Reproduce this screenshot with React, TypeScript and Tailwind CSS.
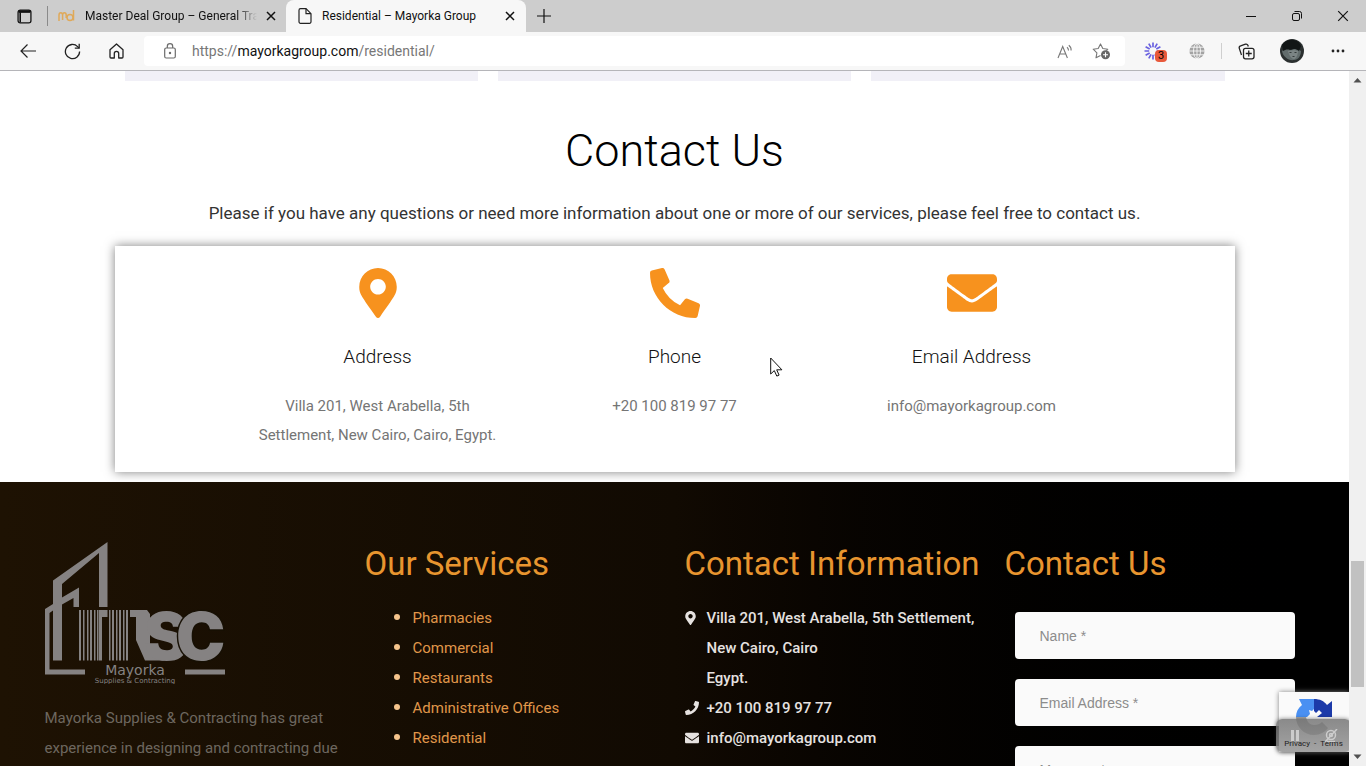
import type { ReactNode } from "react";
import { FaEnvelope, FaMapMarkerAlt, FaPhone, FaPhoneAlt } from "react-icons/fa";

const services = [
  "Pharmacies",
  "Commercial",
  "Restaurants",
  "Administrative Offices",
  "Residential",
];

function IconButton({ label, className = "", children }: { label: string; className?: string; children: ReactNode }) {
  return (
    <button aria-label={label} className={`flex shrink-0 items-center justify-center ${className}`}>
      {children}
    </button>
  );
}

function CloseIcon({ size = 10, width = 1.5 }: { size?: number; width?: number }) {
  return (
    <svg width={size} height={size} viewBox="0 0 10 10" fill="none" stroke="#111" strokeWidth={width}>
      <path d="M1 1l8 8M9 1l-8 8" />
    </svg>
  );
}

function TabStrip() {
  return (
    <div className="flex h-8 items-stretch bg-[#cdcdcd] text-xs text-[#111]">
      <IconButton label="Tab actions" className="w-12">
        <svg width="15" height="15" viewBox="0 0 14 14" fill="none" stroke="#111" strokeWidth="1.2">
          <rect x="1" y="1" width="12" height="12" rx="2" />
          <path d="M1.5 2.400h11" strokeWidth="2.400" />
          <path d="M3 3v9.5" strokeWidth="1.500" />
        </svg>
      </IconButton>
      <div className="flex w-[238px] items-center">
        <span className="-ml-px h-5 w-px bg-[#8a8a8a]" />
        <svg className="ml-2.5 shrink-0" width="17" height="14" viewBox="0 0 17 14" fill="none" stroke="#dfa95a" strokeWidth="1.500">
          <path d="M1 12V6c0-3 3.600-3 3.600 0v5M4.600 6c0-3 3.600-3 3.600 0v3" />
          <circle cx="12" cy="8.400" r="3" />
          <path d="M15.500 1v10.500" />
        </svg>
        <span className="ml-2.5 w-[172px] whitespace-nowrap [mask-image:linear-gradient(to_right,black_88%,transparent)]">
          Master Deal Group – General Tra
        </span>
        <IconButton label="Close tab" className="ml-1.5 w-4">
          <CloseIcon />
        </IconButton>
      </div>
      <div className="flex w-60 items-center rounded-t-lg bg-[#f7f7f7] pr-2 pl-3">
        <svg width="14" height="16" viewBox="0 0 14 16" fill="none" stroke="#222" strokeWidth="1.2">
          <path d="M2.500 0.700h5.500l5 5v8.100a1.500 1.500 0 0 1-1.500 1.500h-9a1.500 1.500 0 0 1-1.500-1.500v-11.600a1.500 1.500 0 0 1 1.500-1.500z" />
          <path d="M8 0.700v5h5" />
        </svg>
        <span className="ml-2.5 flex-1 whitespace-nowrap">Residential – Mayorka Group</span>
        <IconButton label="Close tab" className="w-4">
          <CloseIcon />
        </IconButton>
      </div>
      <IconButton label="New tab" className="w-9">
        <svg width="14" height="14" viewBox="0 0 14 14" stroke="#111" strokeWidth="1.2">
          <path d="M7 0v14M0 7h14" />
        </svg>
      </IconButton>
      <div className="ml-auto flex">
        <IconButton label="Minimize" className="w-[46px]">
          <svg width="10" height="10" viewBox="0 0 10 10" stroke="#111">
            <path d="M0 5.500h10" />
          </svg>
        </IconButton>
        <IconButton label="Restore" className="w-[46px]">
          <svg width="10" height="10" viewBox="0 0 10 10" fill="none" stroke="#111">
            <rect x="0.500" y="2.500" width="7" height="7" rx="1.500" />
            <path d="M2.500 0.500h5a2 2 0 0 1 2 2v5" />
          </svg>
        </IconButton>
        <IconButton label="Close" className="w-[46px]">
          <CloseIcon size={12} width={1} />
        </IconButton>
      </div>
    </div>
  );
}

function Toolbar() {
  return (
    <div className="flex h-[39px] items-center border-b border-[#b5b5b9] bg-[#f7f7f7] pl-1.5">
      <IconButton label="Back" className="w-11">
        <svg width="16" height="14" viewBox="0 0 16 14" fill="none" stroke="#222" strokeWidth="1.2">
          <path d="M7.500 0.500L1 7l6.500 6.500M1 7h15" />
        </svg>
      </IconButton>
      <IconButton label="Refresh" className="w-11">
        <svg width="17" height="17" viewBox="0 0 17 17" fill="none" stroke="#222" strokeWidth="1.300">
          <path d="M15.600 8.500a7.100 7.100 0 1 1-2-4.900L15 5" />
          <path d="M15.200 0.800V5.200H10.800" />
        </svg>
      </IconButton>
      <IconButton label="Home" className="w-11">
        <svg width="15" height="16" viewBox="0 0 15 16" fill="none" stroke="#222" strokeWidth="1.300" strokeLinejoin="round">
          <path d="M1 6.700L7.500 1l6.500 5.700V14a1 1 0 0 1-1 1H9.700v-4.500a2.200 2.200 0 0 0-4.400 0V15H2a1 1 0 0 1-1-1z" />
        </svg>
      </IconButton>
      <div className="ml-1.5 flex h-[30px] flex-1 items-center rounded bg-white pr-2 pl-5">
        <svg className="shrink-0" width="12" height="16" viewBox="0 0 12 16" fill="none" stroke="#6b6b6b" strokeWidth="1.200">
          <rect x="0.700" y="5" width="10.600" height="10" rx="1.500" />
          <path d="M3.300 5V3.400a2.700 2.700 0 0 1 5.400 0V5" />
          <circle cx="6" cy="10" r="0.600" fill="#6b6b6b" />
        </svg>
        <a href="#residential" className="ml-4 text-sm whitespace-nowrap text-[#777]">
          https://<span className="text-[#111]">mayorkagroup.com</span>/residential/
        </a>
        <IconButton label="Read aloud" className="ml-auto w-8">
          <svg width="17" height="15" viewBox="0 0 17 15" fill="none" stroke="#777" strokeWidth="1.100">
            <path d="M1 14L5.700 2.500 10.400 14M2.700 10h6" />
            <path d="M10 3.200a4 4 0 0 1 1.500 3.300M11.800 1.200a6 6 0 0 1 2.300 5.300" />
          </svg>
        </IconButton>
        <IconButton label="Add to favorites" className="ml-1 w-8">
          <svg width="19" height="18" viewBox="0 0 19 18" fill="none" stroke="#777" strokeWidth="1.100" strokeLinejoin="round">
            <path d="M8.500 13.400L4 15.800l.9-5L1.200 7.200l5-.7L8.500 1.900l2.300 4.600 5 .7-1.600 1.500" />
            <circle cx="13.500" cy="12.800" r="4.500" fill="#666" stroke="none" />
            <path d="M13.500 10.300v5M11 12.800h5" stroke="#fff" />
          </svg>
        </IconButton>
      </div>
      <IconButton label="Extension with 3 notices" className="relative ml-2.5 w-9">
        <svg width="18" height="18" viewBox="-9 -9 18 18" stroke="#6a61e0" strokeWidth="1.700">
          <path d="M0-8.500V-3.800M0 8.500V3.800M-8.500 0H-3.800M8.500 0H3.800M4.200-7.400L1.900-3.300M-4.200-7.400L-1.900-3.300M4.200 7.400L1.900 3.300M-4.200 7.400L-1.900 3.300M7.400-4.200L3.300-1.900M-7.400-4.200L-3.300-1.900M7.400 4.200L3.300 1.900M-7.400 4.200L-3.300 1.900" />
        </svg>
        <span className="absolute top-2 right-1 flex h-3 w-3 items-center justify-center rounded-sm bg-[#e8593b] text-[11px] leading-3 text-black">
          3
        </span>
      </IconButton>
      <IconButton label="Web translator" className="ml-1 w-11">
        <svg width="16" height="16" viewBox="0 0 16 16" fill="none" stroke="#f7f7f7" strokeWidth="0.900">
          <circle cx="8" cy="8" r="7.600" fill="#a3a3a3" stroke="none" />
          <ellipse cx="8" cy="8" rx="3.500" ry="7.600" />
          <path d="M8 0v16M0 8h16M1 4.200h14M1 11.800h14" />
        </svg>
      </IconButton>
      <span className="ml-0.5 h-4 w-px bg-[#cfcfcf]" />
      <IconButton label="Collections" className="ml-0.5 w-11">
        <svg width="17" height="17" viewBox="0 0 17 17" fill="none" stroke="#222" strokeWidth="1.300">
          <path d="M3.500 12L1.300 5.400a2 2 0 0 1 1.300-2.500L7.500 1.200a2 2 0 0 1 2.400 1.100l.4 1.200" />
          <rect x="5.500" y="5.300" width="10.500" height="10.500" rx="2" />
          <path d="M10.750 7.500v6M7.750 10.500h6" />
        </svg>
      </IconButton>
      <IconButton label="Profile" className="w-12">
        <svg width="24" height="24" viewBox="0 0 24 24">
          <circle cx="12" cy="12" r="12" fill="#2b3030" />
          <path d="M2 12c3-3 7-3 9-1l5-2 5 3c0 5-3 9-7 9-5 1-11-3-12-9z" fill="#626c6c" />
          <path d="M8 12c1 5 4 8 6 8s4-4 4-8l-4-1z" fill="#7b8484" />
          <path d="M2 6c5-7 16-7 19 1l-2 5c-4-3-6-2-9-1-3-1-5 0-7 1z" fill="#121616" />
          <path d="M9.500 13.500h2M14.500 13.500h2M12.500 17.500h2" stroke="#353b3b" />
        </svg>
      </IconButton>
      <IconButton label="Settings and more" className="mr-1.5 w-11">
        <svg width="14" height="4" viewBox="0 0 14 4" fill="#222">
          <circle cx="2" cy="2" r="1.400" />
          <circle cx="7" cy="2" r="1.400" />
          <circle cx="12" cy="2" r="1.400" />
        </svg>
      </IconButton>
    </div>
  );
}

function ContactItem({ icon, title, children }: { icon: ReactNode; title: string; children: ReactNode }) {
  return (
    <div className="flex flex-1 flex-col items-center px-5 text-center">
      <div className="h-[50px] text-[50px] text-[#f7921e]">{icon}</div>
      <h3 className="mt-6 text-[19px] leading-[30px] font-light text-[#111]">{title}</h3>
      <p className="mt-5 text-[15px] leading-[29px] text-[#757575]">{children}</p>
    </div>
  );
}

function FooterTitle({ children }: { children: ReactNode }) {
  return <h2 className="text-[33px] leading-[44px] whitespace-nowrap text-[#e8952f]">{children}</h2>;
}

function Logo() {
  return (
    <svg width="180" height="142" viewBox="0 0 180 142" fill="#858282" role="img" aria-label="Mayorka Supplies & Contracting">
      <path d="M8 118.500V38.500L62.500 0v65H54V11L17 42v76.500z" />
      <path d="M17 55.500L34 45.500V65H28.500V56L17 62.500z" />
      <path d="M0 67l8-5v6.500l-3.500 2.500v56.500H40v5H0zM140 127.500h40v5h-40z" />
      <path d="M34 68h2v50.500h-2zM38 68h1.500v50.500H38zM42 68h1.500v50.500H42zM45 68h2v50.500h-2zM49 68h1.500v50.500H49zM52 68h1.500v50.500H52zM54 68h8.500v7H57v43.500h-3z" />
      <path d="M64 68h1.500v50.500H64zM67 68h2v50.500h-2zM71 68h1.500v50.500H71zM74 68h2v50.500h-2zM78 68h1.500v50.500H78zM81 68h2v50.500h-2z" />
      <path d="M85 68h17l3 4v32l14 14.500H100L91 98V75h-6z" />
      <text x="99" y="118" fontFamily="Inter" fontWeight="900" fontSize="66">S</text>
      <text x="131" y="118" fontFamily="Inter" fontWeight="900" fontSize="66" stroke="#171004" strokeWidth="3" paintOrder="stroke">C</text>
      <text x="90" y="133" textAnchor="middle" fontFamily="DejaVu Sans" fontSize="14">Mayorka</text>
      <text x="90" y="141" textAnchor="middle" fontFamily="DejaVu Sans" fontSize="7">Supplies &amp; Contracting</text>
    </svg>
  );
}

function ContactSection() {
  return (
    <main className="bg-white">
      <div className="mx-auto grid max-w-[1100px] grid-cols-3 gap-5">
        <div className="h-2.5 bg-[#f1f0f7]" />
        <div className="h-2.5 bg-[#f1f0f7]" />
        <div className="h-2.5 bg-[#f1f0f7]" />
      </div>
      <h1 className="mt-10 text-center text-[45px] leading-[60px] font-light text-black">Contact Us</h1>
      <p className="mt-[15px] text-center text-[17px] leading-[34px] text-[#333]">
        Please if you have any questions or need more information about one or more of our services, please feel free to contact us.
      </p>
      <div className="mx-auto mt-4 mb-2.5 max-w-[1120px] bg-white py-[22px] shadow-[0_0_10px_rgba(0,0,0,0.5)]">
        <div className="mx-auto flex max-w-[891px]">
          <ContactItem icon={<FaMapMarkerAlt />} title="Address">
            Villa 201, West Arabella, 5th
            <br />
            Settlement, New Cairo, Cairo, Egypt.
          </ContactItem>
          <ContactItem icon={<FaPhoneAlt />} title="Phone">
            +20 100 819 97 77
          </ContactItem>
          <ContactItem icon={<FaEnvelope />} title="Email Address">
            info@mayorkagroup.com
          </ContactItem>
        </div>
      </div>
    </main>
  );
}

function Footer() {
  return (
    <footer className="flex-1 bg-linear-to-r from-[#1e1203] via-[#110a02] to-black pt-[60px]">
      <div className="mx-auto grid max-w-[1280px] grid-cols-4">
        <div className="px-2.5">
          <Logo />
          <p className="mt-[19px] text-[15px] leading-[30px] text-[#6d675f]">
            Mayorka Supplies &amp; Contracting has great experience in designing and contracting due
          </p>
        </div>
        <div className="px-2.5">
          <FooterTitle>Our Services</FooterTitle>
          <ul className="mt-[15px] list-disc pl-12 text-[15px] leading-[30px] text-[#e0974a] marker:text-[20px] marker:text-[#f5c48c]">
            {services.map((service) => (
              <li key={service} className="h-[30px]">
                <a href="#services">{service}</a>
              </li>
            ))}
          </ul>
        </div>
        <div className="px-2.5">
          <FooterTitle>Contact Information</FooterTitle>
          <ul className="mt-[17px] text-[15px] leading-[30px] font-medium text-[#e6e2e0]">
            <li className="flex">
              <FaMapMarkerAlt className="mt-2 mr-[11px] w-[11px] shrink-0 text-sm" />
              <span className="whitespace-nowrap">
                Villa 201, West Arabella, 5th Settlement,
                <br />
                New Cairo, Cairo
                <br />
                Egypt.
              </span>
            </li>
            <li className="flex">
              <FaPhone className="mt-2 mr-2 w-[14px] shrink-0 text-sm" />
              <a href="#call">+20 100 819 97 77</a>
            </li>
            <li className="flex">
              <FaEnvelope className="mt-2 mr-2 w-[14px] shrink-0 text-sm" />
              <a href="#mail">info@mayorkagroup.com</a>
            </li>
          </ul>
        </div>
        <div className="px-2.5">
          <FooterTitle>Contact Us</FooterTitle>
          <form className="mt-[26px] flex flex-col gap-5 px-2.5 font-['Liberation_Sans',sans-serif] text-sm">
            <input aria-label="Name" placeholder="Name *" className="h-[47px] rounded bg-[#fafafa] px-[25px] placeholder:text-[#8c8c8c]" />
            <input aria-label="Email Address" placeholder="Email Address *" className="h-[47px] rounded bg-[#fafafa] px-[25px] placeholder:text-[#8c8c8c]" />
            <textarea aria-label="Message" placeholder="Message *" className="h-32 resize-none rounded bg-[#fafafa] px-[25px] py-3.5 placeholder:text-[#8c8c8c]" />
          </form>
        </div>
      </div>
    </footer>
  );
}

function Scrollbar() {
  return (
    <div className="flex w-[17px] shrink-0 flex-col items-center bg-[#f0f0f0] py-1.5">
      <svg width="9" height="6" viewBox="0 0 9 6" fill="#505050">
        <path d="M0.500 5.500l4-4.500 4 4.500z" />
      </svg>
      <div className="grow-[478]" />
      <div className="w-[13px] grow-[126] bg-[#c1c1c1]" />
      <div className="grow-[67]" />
      <svg width="9" height="6" viewBox="0 0 9 6" fill="#505050">
        <path d="M0.500 0.500l4 4.500 4-4.500z" />
      </svg>
    </div>
  );
}

function RecaptchaBadge() {
  return (
    <div className="absolute right-0 bottom-3.5 h-[60px] w-[70px] bg-[#fafafa] shadow-[0_0_5px_gray]">
      <svg className="absolute top-1.5 left-4" width="39" height="39" viewBox="0 0 39 39">
        <path d="M4 1h15v10l-2 2-3-1 1 4-3 3H1c0-5 2-9 6-12z" fill="#4a90f2" />
        <path d="M19 1c6 0 10 2 13 6l5-4v16H22l5-4-3-3-3 3-2-2z" fill="#1c3aa9" />
        <path d="M1 19c0 10 8 18 18 18 6 0 11-3 14-7l-6-6c-2 2-4 3-8 3-4 0-7-3-8-8z" fill="#ababab" />
      </svg>
      <div className="absolute -right-0.5 bottom-0 flex h-[33px] w-[75px] flex-col items-center justify-end rounded-md bg-linear-to-b from-[#6e6e6e]/80 to-[#8e8e8e]/80 text-[8px] leading-3 text-[#222] shadow-[0_0_4px_rgba(0,0,0,0.5)]">
        <svg className="absolute top-2.5 left-3" width="52" height="14" viewBox="0 0 52 14" fill="none" stroke="#ccc" strokeWidth="1.500">
          <path d="M4.500 1v11M9.500 1v11" strokeWidth="3" />
          <circle cx="43" cy="6" r="4.500" />
          <circle cx="43" cy="6" r="1.500" />
          <path d="M39 12.500h8M37 13L49 0" />
        </svg>
        <span className="relative mb-0.5 flex gap-1 whitespace-nowrap">
          <a href="#privacy">Privacy</a>-<a href="#terms">Terms</a>
        </span>
      </div>
    </div>
  );
}

export default function App() {
  return (
    <div className="relative flex h-screen flex-col overflow-hidden font-[Roboto,sans-serif]">
      <header>
        <TabStrip />
        <Toolbar />
      </header>
      <div className="flex min-h-0 flex-1">
        <div className="relative flex min-w-0 flex-1 flex-col overflow-hidden">
          <ContactSection />
          <Footer />
          <RecaptchaBadge />
        </div>
        <Scrollbar />
      </div>
      <svg className="pointer-events-none absolute top-[357px] left-[770px]" width="13" height="20" viewBox="0 0 13 20" fill="#fff" stroke="#111">
        <path d="M0.700 1v16l3.600-3.400 2.500 5.500 2.300-1-2.400-5.300h5.200z" />
      </svg>
    </div>
  );
}
